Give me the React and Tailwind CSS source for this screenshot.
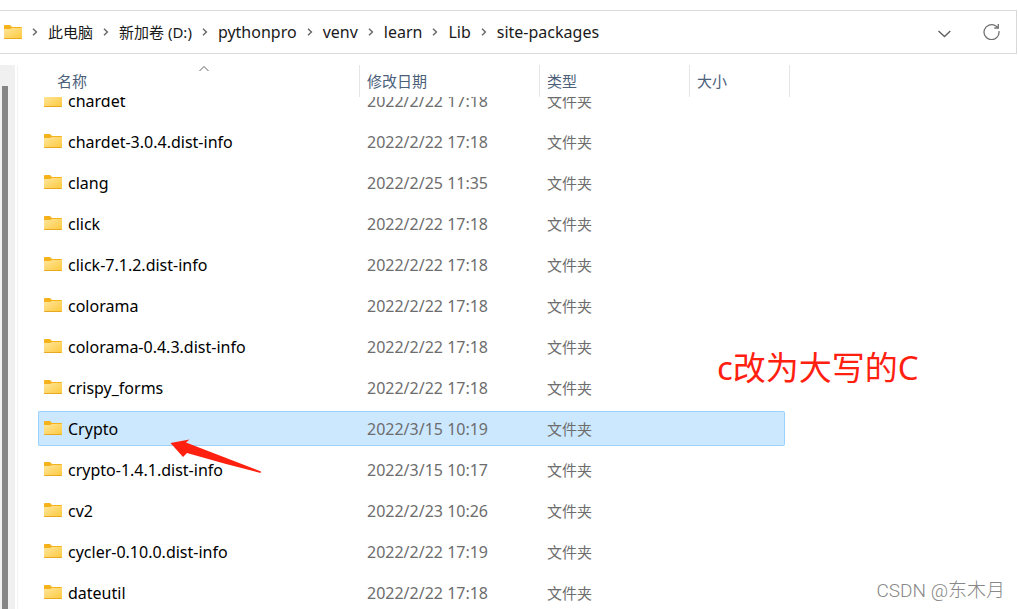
import React from "react";

const crumbs = ["此电脑", "新加卷 (D:)", "pythonpro", "venv", "learn", "Lib", "site-packages"];

const rows = [
  ["chardet", "2022/2/22 17:18"],
  ["chardet-3.0.4.dist-info", "2022/2/22 17:18"],
  ["clang", "2022/2/25 11:35"],
  ["click", "2022/2/22 17:18"],
  ["click-7.1.2.dist-info", "2022/2/22 17:18"],
  ["colorama", "2022/2/22 17:18"],
  ["colorama-0.4.3.dist-info", "2022/2/22 17:18"],
  ["crispy_forms", "2022/2/22 17:18"],
  ["Crypto", "2022/3/15 10:19"],
  ["crypto-1.4.1.dist-info", "2022/3/15 10:17"],
  ["cv2", "2022/2/23 10:26"],
  ["cycler-0.10.0.dist-info", "2022/2/22 17:19"],
  ["dateutil", "2022/2/22 17:18"],
];

function FolderIcon() {
  return (
    <svg className="h-[14px] w-[18px] shrink-0" viewBox="0 0 18 14" aria-hidden="true">
      <defs>
        <linearGradient id="folder" x1="0" y1="0" x2="1" y2="1">
          <stop offset="0" stopColor="#ffe69c" />
          <stop offset="1" stopColor="#fdc93c" />
        </linearGradient>
      </defs>
      <path d="M0 1Q0 0 1 0H6L8 2H17.300Q18 2 18 3V6H0Z" fill="#f5b21b" />
      <path d="M0 4H6L8 3H18V13.200Q18 14 17 14H1Q0 14 0 13.200Z" fill="url(#folder)" />
      <path d="M0 13H18Q18 14 17 14H1Q0 14 0 13Z" fill="#e9a820" />
    </svg>
  );
}

function Chevron() {
  return (
    <svg className="h-2 w-[6px] shrink-0" viewBox="0 0 6 8" fill="none" stroke="#666" strokeWidth="1.4" aria-hidden="true">
      <path d="M1 0.800L4.400 4L1 7.200" />
    </svg>
  );
}

function Cell({ clipped, selected, edge = "", children }) {
  return (
    <div className={clipped ? "flex h-6 flex-col justify-end overflow-hidden" : "flex h-[41px] flex-col justify-end"}>
      <div className="flex h-[41px] shrink-0 items-center">
        <div
          className={`flex h-[35px] w-full items-center border-y ${edge} ${
            selected ? "border-[#99d1ff] bg-[#cce8ff]" : "border-transparent"
          }`}
        >
          {children}
        </div>
      </div>
    </div>
  );
}

export default function App() {
  return (
    <div className="relative flex h-screen flex-col overflow-hidden bg-white pt-[10px] font-['Noto_Sans','Noto_Sans_CJK_SC',sans-serif] text-[15px] leading-5 text-black">
      <header className="mr-px flex h-11 shrink-0 items-center border border-l-0 border-[#d9d9d9] pb-px pl-1">
        <FolderIcon />
        <nav aria-label="路径" className="flex-1 pl-[10px]">
          <ol className="flex items-center">
            {crumbs.map((name, i) => (
              <li key={name} className="flex items-center">
                <Chevron />
                <button
                  type="button"
                  className={`px-[10px] whitespace-nowrap text-[#1a1a1a] ${i < 2 ? "text-[15px]" : "text-[16px]"}`}
                >
                  {name}
                </button>
              </li>
            ))}
          </ol>
        </nav>
        <div className="flex items-center gap-8 pr-4">
          <button type="button" aria-label="展开">
            <svg className="h-4 w-[14px]" viewBox="0 0 14 16" fill="none" stroke="#606060" strokeWidth="1.400" aria-hidden="true">
              <path d="M1.500 7L7.500 12.500L13.300 7" />
            </svg>
          </button>
          <button type="button" aria-label="刷新">
            <svg className="h-[17px] w-[17px]" viewBox="0 0 17 17" fill="none" stroke="#707070" strokeWidth="1.300" aria-hidden="true">
              <path d="M16 8.200A7.500 7.500 0 1 1 12.500 2.700L15 4.600" />
              <path d="M15.300 1V5H11.300" />
            </svg>
          </button>
        </div>
      </header>

      <main className="mt-[11px] flex min-h-0 flex-1">
        <div className="w-[15px] shrink-0 bg-[#f0f0f0] pt-[21px] pl-[2px]">
          <div className="h-full w-[6px] bg-[#858585]" />
        </div>
        <div className="ml-[2px] min-w-0 flex-1 border-l border-[#f3f3f3] pl-5">
          <table className="w-[752px] table-fixed border-separate border-spacing-0 text-left">
            <colgroup>
              <col className="w-[322px]" />
              <col className="w-[180px]" />
              <col className="w-[150px]" />
              <col className="w-[100px]" />
            </colgroup>
            <thead className="text-[#4c607a]">
              <tr className="h-8">
                <th scope="col" aria-sort="ascending" className="relative border-r border-[#e5e5e5] p-0 pl-[19px] font-normal">
                  名称
                  <svg className="absolute top-0 left-1/2 h-[7px] w-[10px]" viewBox="0 0 10 7" fill="none" stroke="#606060" aria-hidden="true">
                    <path d="M0.500 6L5 1.500L9.500 6" />
                  </svg>
                </th>
                <th scope="col" className="border-r border-[#e5e5e5] p-0 pl-[7px] font-normal">修改日期</th>
                <th scope="col" className="border-r border-[#e5e5e5] p-0 pl-[7px] font-normal">类型</th>
                <th scope="col" className="border-r border-[#e5e5e5] p-0 pl-[7px] font-normal">大小</th>
              </tr>
            </thead>
            <tbody>
              {rows.map(([name, date], i) => {
                const state = { clipped: i === 0, selected: name === "Crypto" };
                return (
                  <tr key={name} aria-selected={state.selected}>
                    <td className="p-0 text-[16px] leading-5">
                      <Cell {...state} edge="rounded-l-[2px] border-l pl-[5px] gap-[6px]">
                        <span className="pb-[2px]">
                          <FolderIcon />
                        </span>
                        <span>{name}</span>
                      </Cell>
                    </td>
                    <td className="p-0 text-[16px] leading-5 text-[#6d6d6d]">
                      <Cell {...state} edge="pl-[7px]">{date}</Cell>
                    </td>
                    <td className="p-0 text-[#6d6d6d]">
                      <Cell {...state} edge="pl-[7px]">文件夹</Cell>
                    </td>
                    <td className="p-0 pr-[5px]">
                      <Cell {...state} edge="rounded-r-[2px] border-r" />
                    </td>
                  </tr>
                );
              })}
            </tbody>
          </table>
        </div>
      </main>

      <svg className="absolute top-[439px] left-[170px] h-[35px] w-[92px]" viewBox="0 0 92 35" aria-hidden="true">
        <path d="M0.500 4L19.500 0.500L16 3.500L91 32.500L90.500 34L56 25L17 14L13 18Z" fill="#ff2010" />
      </svg>
      <p className="absolute top-[344px] left-[717px] text-[33px] leading-[48px] whitespace-nowrap text-[#ff2010]">c改为大写的C</p>
      <p className="absolute right-[13px] bottom-[6px] font-[Roboto,'Noto_Sans_CJK_SC',sans-serif] text-[19px] leading-6 font-light whitespace-nowrap text-[#888]">
        CSDN @东木月
      </p>
    </div>
  );
}
